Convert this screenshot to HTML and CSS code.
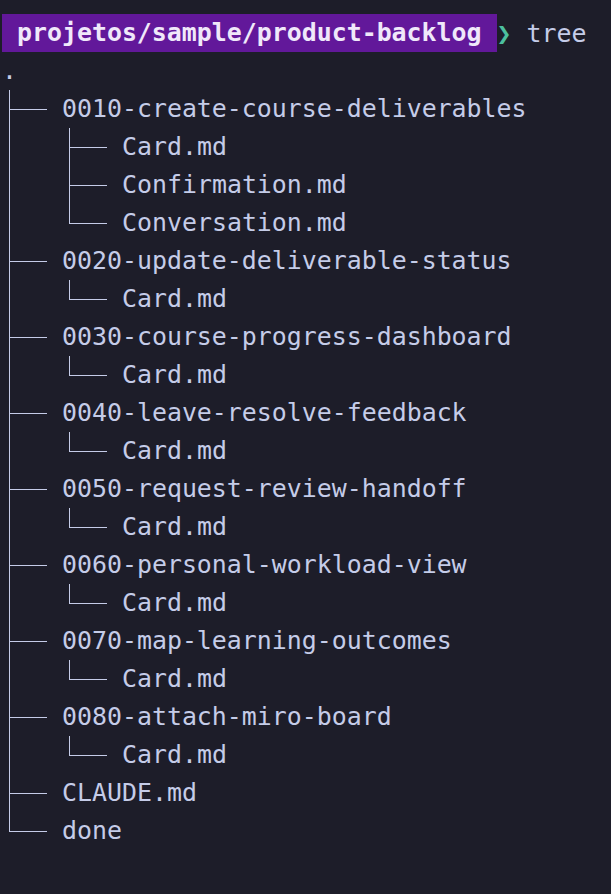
FILE: index.html
```html
<!DOCTYPE html>
<html>
<head>
<meta charset="utf-8">
<link rel="stylesheet" href="styles.css">
</head>
<body>
<div class="term">
  <div class="row prompt"><span class="cwd"> projetos/sample/product-backlog </span><span class="chev">❯ </span><span>tree</span></div>
  <div class="row"><span class="name">.</span></div>

  <div class="row"><span class="c tee"></span><span class="name">0010-create-course-deliverables</span></div>
  <div class="row"><span class="c pipe"></span><span class="c tee"></span><span class="name">Card.md</span></div>
  <div class="row"><span class="c pipe"></span><span class="c tee"></span><span class="name">Confirmation.md</span></div>
  <div class="row"><span class="c pipe"></span><span class="c end"></span><span class="name">Conversation.md</span></div>

  <div class="row"><span class="c tee"></span><span class="name">0020-update-deliverable-status</span></div>
  <div class="row"><span class="c pipe"></span><span class="c end"></span><span class="name">Card.md</span></div>

  <div class="row"><span class="c tee"></span><span class="name">0030-course-progress-dashboard</span></div>
  <div class="row"><span class="c pipe"></span><span class="c end"></span><span class="name">Card.md</span></div>

  <div class="row"><span class="c tee"></span><span class="name">0040-leave-resolve-feedback</span></div>
  <div class="row"><span class="c pipe"></span><span class="c end"></span><span class="name">Card.md</span></div>

  <div class="row"><span class="c tee"></span><span class="name">0050-request-review-handoff</span></div>
  <div class="row"><span class="c pipe"></span><span class="c end"></span><span class="name">Card.md</span></div>

  <div class="row"><span class="c tee"></span><span class="name">0060-personal-workload-view</span></div>
  <div class="row"><span class="c pipe"></span><span class="c end"></span><span class="name">Card.md</span></div>

  <div class="row"><span class="c tee"></span><span class="name">0070-map-learning-outcomes</span></div>
  <div class="row"><span class="c pipe"></span><span class="c end"></span><span class="name">Card.md</span></div>

  <div class="row"><span class="c tee"></span><span class="name">0080-attach-miro-board</span></div>
  <div class="row"><span class="c pipe"></span><span class="c end"></span><span class="name">Card.md</span></div>

  <div class="row"><span class="c tee"></span><span class="name">CLAUDE.md</span></div>
  <div class="row"><span class="c end"></span><span class="name">done</span></div>
</div>
</body>
</html>
```

FILE: styles.css
```css
html, body {
  margin: 0;
  padding: 0;
  background: #1d1d29;
  height: 100%;
}

.term {
  padding: 14px 0 0 2px;
  font-family: "DejaVu Sans Mono", "Liberation Mono", monospace;
  font-size: 24.9px;
  color: #c5cce8;
}

.row {
  display: flex;
  align-items: center;
  height: 38px;
  white-space: pre;
}

.prompt .cwd {
  background: #62189a;
  color: #f0e8fa;
  font-weight: bold;
  height: 38px;
  line-height: 38px;
}

.prompt .chev {
  color: #4cbf9f;
}

.c {
  position: relative;
  flex: 0 0 60px;
  width: 60px;
  height: 38px;
  align-self: stretch;
}

.pipe::before,
.tee::before,
.end::before {
  content: "";
  position: absolute;
  left: 7px;
  top: 0;
  width: 1px;
  height: 38px;
  background: #c5cce8;
}

.end::before {
  height: 20px;
}

.tee::after,
.end::after {
  content: "";
  position: absolute;
  left: 7px;
  top: 19px;
  width: 38px;
  height: 1px;
  background: #c5cce8;
}

.name {
  line-height: 38px;
}
```
